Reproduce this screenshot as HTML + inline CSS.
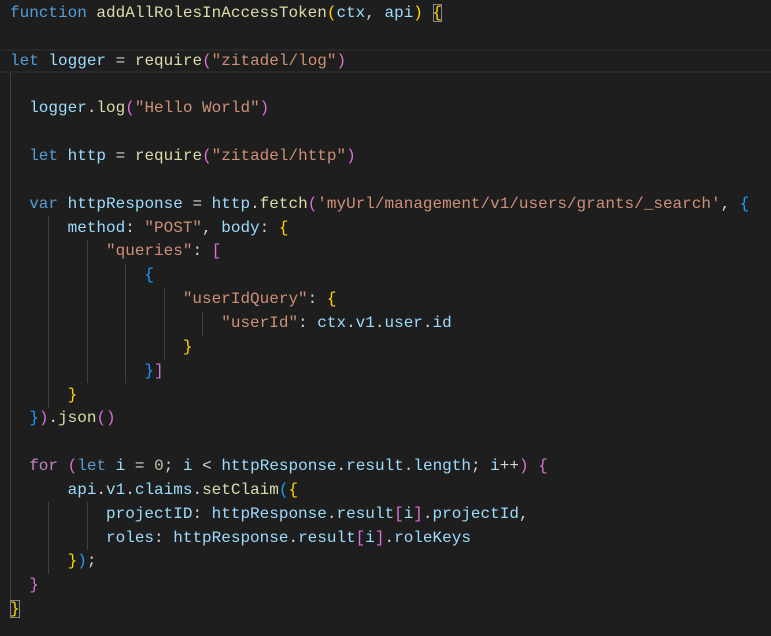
<!DOCTYPE html>
<html><head><meta charset="utf-8"><style>
html,body{margin:0;padding:0;background:#1e1e1e;width:771px;height:636px;overflow:hidden}
.c{position:absolute;left:10px;top:2px;font-family:"Liberation Mono",monospace;font-size:16px;line-height:23.84px;color:#d4d4d4;white-space:pre}
.k{color:#569cd6}.f{color:#dcdcaa}.v{color:#9cdcfe}.s{color:#ce9178}.n{color:#b5cea8}.ctl{color:#c586c0}
.g{color:#ffd700}.p{color:#da70d6}.b{color:#179fff}
.box{outline:1px solid #888;outline-offset:-1px}
.cur{position:absolute;left:0;right:0;top:48.5px;height:24px;border-top:2px solid #282828;border-bottom:2px solid #282828;box-sizing:border-box}
.gd{position:absolute;width:1px;background:#404040}
</style></head><body>
<div class="cur"></div>
<div class="gd" style="left:10px;top:73px;height:528px"></div>
<div class="gd" style="left:48px;top:216px;height:192px"></div>
<div class="gd" style="left:87px;top:240px;height:143px"></div>
<div class="gd" style="left:125px;top:264px;height:119px"></div>
<div class="gd" style="left:164px;top:288px;height:72px"></div>
<div class="gd" style="left:202px;top:312px;height:24px"></div>
<div class="gd" style="left:48px;top:502px;height:72px"></div>
<div class="gd" style="left:87px;top:502px;height:48px"></div>
<div class="c"><span class="k">function</span> <span class="f">addAllRolesInAccessToken</span><span class="g">(</span><span class="v">ctx</span>, <span class="v">api</span><span class="g">)</span> <span class="g box">{</span>

<span class="k">let</span> <span class="v">logger</span> = <span class="f">require</span><span class="p">(</span><span class="s">"zitadel/log"</span><span class="p">)</span>

  <span class="v">logger</span>.<span class="f">log</span><span class="p">(</span><span class="s">"Hello World"</span><span class="p">)</span>

  <span class="k">let</span> <span class="v">http</span> = <span class="f">require</span><span class="p">(</span><span class="s">"zitadel/http"</span><span class="p">)</span>

  <span class="k">var</span> <span class="v">httpResponse</span> = <span class="v">http</span>.<span class="f">fetch</span><span class="p">(</span><span class="s">'myUrl/management/v1/users/grants/_search'</span>, <span class="b">{</span>
      <span class="v">method</span>: <span class="s">"POST"</span>, <span class="v">body</span>: <span class="g">{</span>
          <span class="s">"queries"</span>: <span class="p">[</span>
              <span class="b">{</span>
                  <span class="s">"userIdQuery"</span>: <span class="g">{</span>
                      <span class="s">"userId"</span>: <span class="v">ctx</span>.<span class="v">v1</span>.<span class="v">user</span>.<span class="v">id</span>
                  <span class="g">}</span>
              <span class="b">}</span><span class="p">]</span>
      <span class="g">}</span>
  <span class="b">}</span><span class="p">)</span>.<span class="f">json</span><span class="p">()</span>

  <span class="ctl">for</span> <span class="p">(</span><span class="k">let</span> <span class="v">i</span> = <span class="n">0</span>; <span class="v">i</span> &lt; <span class="v">httpResponse</span>.<span class="v">result</span>.<span class="v">length</span>; <span class="v">i</span>++<span class="p">)</span> <span class="p">{</span>
      <span class="v">api</span>.<span class="v">v1</span>.<span class="v">claims</span>.<span class="f">setClaim</span><span class="b">(</span><span class="g">{</span>
          <span class="v">projectID</span>: <span class="v">httpResponse</span>.<span class="v">result</span><span class="p">[</span><span class="v">i</span><span class="p">]</span>.<span class="v">projectId</span>,
          <span class="v">roles</span>: <span class="v">httpResponse</span>.<span class="v">result</span><span class="p">[</span><span class="v">i</span><span class="p">]</span>.<span class="v">roleKeys</span>
      <span class="g">}</span><span class="b">)</span>;
  <span class="p">}</span>
<span class="g box">}</span></div>
</body></html>
